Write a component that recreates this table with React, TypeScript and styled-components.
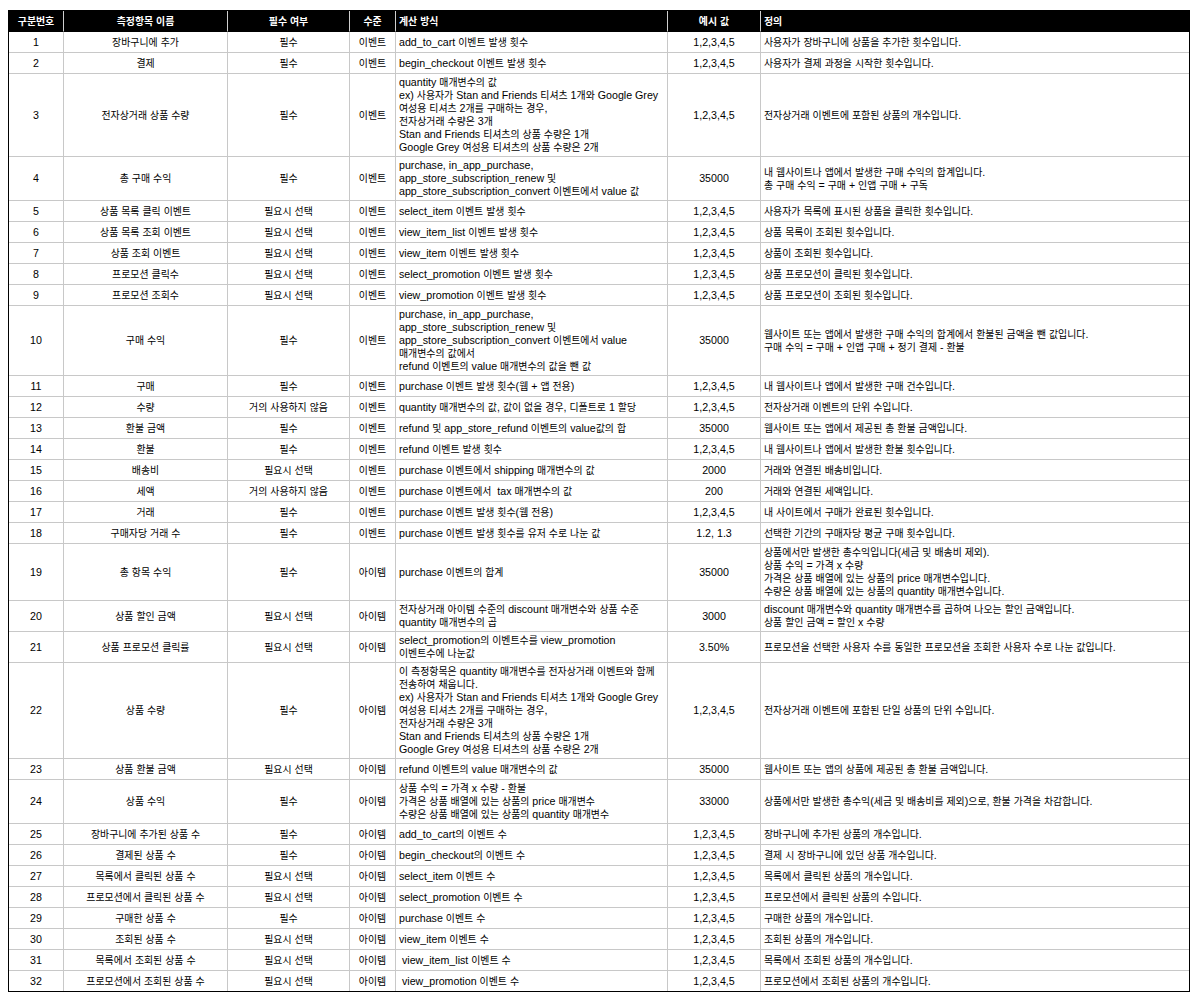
import React from 'react';
import styled, { createGlobalStyle } from 'styled-components';

type Align = 'left' | 'center';

interface MetricRow {
  name: string;
  required: string;
  level: string;
  formula: string;
  sample: string;
  definition: string;
}

const GlobalStyle = createGlobalStyle`
  html, body {
    margin: 0;
    padding: 0;
    background: #fff;
  }
  body {
    font-family: 'Liberation Sans', Arial, 'Noto Sans CJK KR', sans-serif;
    color: #000;
  }
`;

const columns: { label: string; width: number; align: Align }[] = [
  { label: '구분번호', width: 55, align: 'center' },
  { label: '측정항목 이름', width: 164, align: 'center' },
  { label: '필수 여부', width: 122, align: 'center' },
  { label: '수준', width: 46, align: 'center' },
  { label: '계산 방식', width: 272, align: 'left' },
  { label: '예시 값', width: 93, align: 'center' },
  { label: '정의', width: 428, align: 'left' },
];

const rows: MetricRow[] = [
  { name: '장바구니에 추가', required: '필수', level: '이벤트', formula: 'add_to_cart 이벤트 발생 횟수', sample: '1,2,3,4,5', definition: '사용자가 장바구니에 상품을 추가한 횟수입니다.' },
  { name: '결제', required: '필수', level: '이벤트', formula: 'begin_checkout 이벤트 발생 횟수', sample: '1,2,3,4,5', definition: '사용자가 결제 과정을 시작한 횟수입니다.' },
  {
    name: '전자상거래 상품 수량',
    required: '필수',
    level: '이벤트',
    formula:
      'quantity 매개변수의 값\nex) 사용자가 Stan and Friends 티셔츠 1개와 Google Grey\n여성용 티셔츠 2개를 구매하는 경우,\n전자상거래 수량은 3개\nStan and Friends 티셔츠의 상품 수량은 1개\nGoogle Grey 여성용 티셔츠의 상품 수량은 2개',
    sample: '1,2,3,4,5',
    definition: '전자상거래 이벤트에 포함된 상품의 개수입니다.',
  },
  {
    name: '총 구매 수익',
    required: '필수',
    level: '이벤트',
    formula: 'purchase, in_app_purchase,\napp_store_subscription_renew 및\napp_store_subscription_convert 이벤트에서 value 값',
    sample: '35000',
    definition: '내 웹사이트나 앱에서 발생한 구매 수익의 합계입니다.\n총 구매 수익 = 구매 + 인앱 구매 + 구독',
  },
  { name: '상품 목록 클릭 이벤트', required: '필요시 선택', level: '이벤트', formula: 'select_item 이벤트 발생 횟수', sample: '1,2,3,4,5', definition: '사용자가 목록에 표시된 상품을 클릭한 횟수입니다.' },
  { name: '상품 목록 조회 이벤트', required: '필요시 선택', level: '이벤트', formula: 'view_item_list 이벤트 발생 횟수', sample: '1,2,3,4,5', definition: '상품 목록이 조회된 횟수입니다.' },
  { name: '상품 조회 이벤트', required: '필요시 선택', level: '이벤트', formula: 'view_item 이벤트 발생 횟수', sample: '1,2,3,4,5', definition: '상품이 조회된 횟수입니다.' },
  { name: '프로모션 클릭수', required: '필요시 선택', level: '이벤트', formula: 'select_promotion 이벤트 발생 횟수', sample: '1,2,3,4,5', definition: '상품 프로모션이 클릭된 횟수입니다.' },
  { name: '프로모션 조회수', required: '필요시 선택', level: '이벤트', formula: 'view_promotion 이벤트 발생 횟수', sample: '1,2,3,4,5', definition: '상품 프로모션이 조회된 횟수입니다.' },
  {
    name: '구매 수익',
    required: '필수',
    level: '이벤트',
    formula:
      'purchase, in_app_purchase,\napp_store_subscription_renew 및\napp_store_subscription_convert 이벤트에서 value\n매개변수의 값에서\nrefund 이벤트의 value 매개변수의 값을 뺀 값',
    sample: '35000',
    definition: '웹사이트 또는 앱에서 발생한 구매 수익의 합계에서 환불된 금액을 뺀 값입니다.\n구매 수익 = 구매 + 인앱 구매 + 정기 결제 - 환불',
  },
  { name: '구매', required: '필수', level: '이벤트', formula: 'purchase 이벤트 발생 횟수(웹 + 앱 전용)', sample: '1,2,3,4,5', definition: '내 웹사이트나 앱에서 발생한 구매 건수입니다.' },
  { name: '수량', required: '거의 사용하지 않음', level: '이벤트', formula: 'quantity 매개변수의 값, 값이 없을 경우, 디폴트로 1 할당', sample: '1,2,3,4,5', definition: '전자상거래 이벤트의 단위 수입니다.' },
  { name: '환불 금액', required: '필수', level: '이벤트', formula: 'refund 및 app_store_refund 이벤트의 value값의 합', sample: '35000', definition: '웹사이트 또는 앱에서 제공된 총 환불 금액입니다.' },
  { name: '환불', required: '필수', level: '이벤트', formula: 'refund 이벤트 발생 횟수', sample: '1,2,3,4,5', definition: '내 웹사이트나 앱에서 발생한 환불 횟수입니다.' },
  { name: '배송비', required: '필요시 선택', level: '이벤트', formula: 'purchase 이벤트에서 shipping 매개변수의 값', sample: '2000', definition: '거래와 연결된 배송비입니다.' },
  { name: '세액', required: '거의 사용하지 않음', level: '이벤트', formula: 'purchase 이벤트에서  tax 매개변수의 값', sample: '200', definition: '거래와 연결된 세액입니다.' },
  { name: '거래', required: '필수', level: '이벤트', formula: 'purchase 이벤트 발생 횟수(웹 전용)', sample: '1,2,3,4,5', definition: '내 사이트에서 구매가 완료된 횟수입니다.' },
  { name: '구매자당 거래 수', required: '필수', level: '이벤트', formula: 'purchase 이벤트 발생 횟수를 유저 수로 나눈 값', sample: '1.2, 1.3', definition: '선택한 기간의 구매자당 평균 구매 횟수입니다.' },
  {
    name: '총 항목 수익',
    required: '필수',
    level: '아이템',
    formula: 'purchase 이벤트의 합계',
    sample: '35000',
    definition:
      '상품에서만 발생한 총수익입니다(세금 및 배송비 제외).\n상품 수익 = 가격 x 수량\n가격은 상품 배열에 있는 상품의 price 매개변수입니다.\n수량은 상품 배열에 있는 상품의 quantity 매개변수입니다.',
  },
  {
    name: '상품 할인 금액',
    required: '필요시 선택',
    level: '아이템',
    formula: '전자상거래 아이템 수준의 discount 매개변수와 상품 수준\nquantity 매개변수의 곱',
    sample: '3000',
    definition: 'discount 매개변수와 quantity 매개변수를 곱하여 나오는 할인 금액입니다.\n상품 할인 금액 = 할인 x 수량',
  },
  {
    name: '상품 프로모션 클릭률',
    required: '필요시 선택',
    level: '아이템',
    formula: 'select_promotion의 이벤트수를 view_promotion\n이벤트수에 나눈값',
    sample: '3.50%',
    definition: '프로모션을 선택한 사용자 수를 동일한 프로모션을 조회한 사용자 수로 나눈 값입니다.',
  },
  {
    name: '상품 수량',
    required: '필수',
    level: '아이템',
    formula:
      '이 측정항목은 quantity 매개변수를 전자상거래 이벤트와 함께\n전송하여 채웁니다.\nex) 사용자가 Stan and Friends 티셔츠 1개와 Google Grey\n여성용 티셔츠 2개를 구매하는 경우,\n전자상거래 수량은 3개\nStan and Friends 티셔츠의 상품 수량은 1개\nGoogle Grey 여성용 티셔츠의 상품 수량은 2개',
    sample: '1,2,3,4,5',
    definition: '전자상거래 이벤트에 포함된 단일 상품의 단위 수입니다.',
  },
  { name: '상품 환불 금액', required: '필요시 선택', level: '아이템', formula: 'refund 이벤트의 value 매개변수의 값', sample: '35000', definition: '웹사이트 또는 앱의 상품에 제공된 총 환불 금액입니다.' },
  {
    name: '상품 수익',
    required: '필수',
    level: '아이템',
    formula: '상품 수익 = 가격 x 수량 - 환불\n가격은 상품 배열에 있는 상품의 price 매개변수\n수량은 상품 배열에 있는 상품의 quantity 매개변수',
    sample: '33000',
    definition: '상품에서만 발생한 총수익(세금 및 배송비를 제외)으로, 환불 가격을 차감합니다.',
  },
  { name: '장바구니에 추가된 상품 수', required: '필수', level: '아이템', formula: 'add_to_cart의 이벤트 수', sample: '1,2,3,4,5', definition: '장바구니에 추가된 상품의 개수입니다.' },
  { name: '결제된 상품 수', required: '필수', level: '아이템', formula: 'begin_checkout의 이벤트 수', sample: '1,2,3,4,5', definition: '결제 시 장바구니에 있던 상품 개수입니다.' },
  { name: '목록에서 클릭된 상품 수', required: '필요시 선택', level: '아이템', formula: 'select_item 이벤트 수', sample: '1,2,3,4,5', definition: '목록에서 클릭된 상품의 개수입니다.' },
  { name: '프로모션에서 클릭된 상품 수', required: '필요시 선택', level: '아이템', formula: 'select_promotion 이벤트 수', sample: '1,2,3,4,5', definition: '프로모션에서 클릭된 상품의 수입니다.' },
  { name: '구매한 상품 수', required: '필수', level: '아이템', formula: 'purchase 이벤트 수', sample: '1,2,3,4,5', definition: '구매한 상품의 개수입니다.' },
  { name: '조회된 상품 수', required: '필요시 선택', level: '아이템', formula: 'view_item 이벤트 수', sample: '1,2,3,4,5', definition: '조회된 상품의 개수입니다.' },
  { name: '목록에서 조회된 상품 수', required: '필요시 선택', level: '아이템', formula: ' view_item_list 이벤트 수', sample: '1,2,3,4,5', definition: '목록에서 조회된 상품의 개수입니다.' },
  { name: '프로모션에서 조회된 상품 수', required: '필요시 선택', level: '아이템', formula: ' view_promotion 이벤트 수', sample: '1,2,3,4,5', definition: '프로모션에서 조회된 상품의 개수입니다.' },
];

// hangul runs get a narrower korean face so lines keep the sheet's widths
const HANGUL = /([\u3131-\u318E\uAC00-\uD7A3]+)/;

const KoText: React.FC<{ text: string }> = ({ text }) => (
  <>
    {text.split(HANGUL).map((part, i) =>
      i % 2 === 1 ? <Hangul key={i}>{part}</Hangul> : part
    )}
  </>
);

const App: React.FC = () => {
  return (
    <Page>
      <GlobalStyle />
      <Sheet>
        <Table>
          <colgroup>
            {columns.map((c) => (
              <col key={c.label} style={{ width: c.width }} />
            ))}
          </colgroup>
          <thead>
            <tr>
              {columns.map((c) => (
                <HeadCell key={c.label} $align={c.align}>
                  <KoText text={c.label} />
                </HeadCell>
              ))}
            </tr>
          </thead>
          <tbody>
            {rows.map((r, i) => (
              <tr key={i}>
                <Cell $align="center">{i + 1}</Cell>
                <Cell $align="center"><KoText text={r.name} /></Cell>
                <Cell $align="center"><KoText text={r.required} /></Cell>
                <Cell $align="center"><KoText text={r.level} /></Cell>
                <Cell $align="left"><KoText text={r.formula} /></Cell>
                <Cell $align="center">{r.sample}</Cell>
                <Cell $align="left"><KoText text={r.definition} /></Cell>
              </tr>
            ))}
          </tbody>
        </Table>
      </Sheet>
    </Page>
  );
};

const Page = styled.div`
  padding: 10px 8px 12px;
`;

const Sheet = styled.div`
  display: inline-block;
  border: 1px solid #000;
`;

const Table = styled.table`
  border-collapse: separate;
  border-spacing: 0;
  table-layout: fixed;
  width: 1180px;
  font-size: 10.67px;
  line-height: 13px;
`;

const Hangul = styled.span`
  font-family: 'Noto Sans CJK KR', sans-serif;
  font-size: 0.93em;
  line-height: 1;
`;

const HeadCell = styled.th<{ $align: Align }>`
  height: 16px;
  padding: 2px 3px;
  background: #000;
  color: #fff;
  font-weight: bold;
  text-align: ${(p) => p.$align};
  vertical-align: middle;
  white-space: pre;
  border-right: 1px solid #cfcfcf;
  border-bottom: 1px solid #000;

  &:last-child {
    border-right: none;
  }
`;

const Cell = styled.td<{ $align: Align }>`
  height: 16px;
  padding: 2px 3px;
  text-align: ${(p) => p.$align};
  vertical-align: middle;
  white-space: pre;
  overflow: hidden;
  border-right: 1px solid #c8c8c8;
  border-bottom: 1px solid #c8c8c8;

  &:last-child {
    border-right: none;
  }

  tr:last-child > & {
    border-bottom: none;
  }
`;

export default App;
